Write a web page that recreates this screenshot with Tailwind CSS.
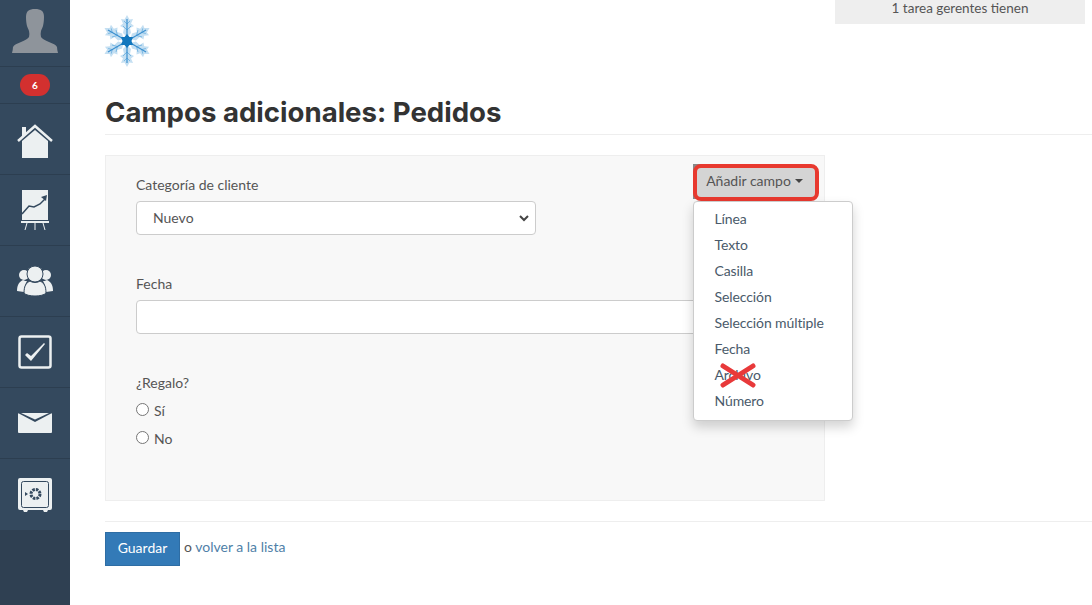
<!DOCTYPE html>
<html lang="es">
<head>
    <title>Campos adicionales: Pedidos</title>
    <meta charset="utf-8">
    <script src="https://cdn.jsdelivr.net/npm/@tailwindcss/browser@4"></script>
</head>
<body class="flex w-[1092px] h-[605px] overflow-hidden bg-white font-['Lato','Liberation_Sans',sans-serif] text-[14px] text-[#555]">
    <!-- sidebar -->
    <nav class="flex flex-col w-[70px] h-full bg-[#2f4052] shrink-0">
        <div class="flex items-end justify-center h-[67px] bg-[#34495e] border-b border-[#2c3e50]">
            <svg width="46" height="44" viewBox="0 0 46 44" class="mb-[13px]"><path fill="#8e949b" d="M23 0c-6 0-9 2-9 8 0 4 .5 7 1 9 .5 2 1.500 3 2 5 .5 2 .5 4 0 6-1 2-4 3-8 5-4 1.500-7 3-8 5 0 2-.5 4-1 6h46c-.5-2-1-4-1-6-1-2-4-3.500-8-5-4-2-7-3-8-5-.5-2-.5-4 0-6 .5-2 1.500-3 2-5 .5-2 1-5 1-9 0-6-3-8-9-8z"/></svg>
        </div>
        <div class="flex items-center justify-center h-[37px] bg-[#34495e] border-b border-[#2c3e50]">
            <span class="flex items-center justify-center w-[30px] h-[22px] rounded-full bg-[#d3302f] text-white text-[10px] font-bold">6</span>
        </div>
        <div class="flex items-center justify-center h-[71px] bg-[#34495e] border-b border-[#2c3e50]">
            <svg width="36" height="34" viewBox="0 0 36 34" class="mt-[3px]"><path fill="#ecf0f1" d="M5 3h4v6l-4 4z"/><path fill="none" stroke="#ecf0f1" stroke-width="2.500" d="M1 17 18 2l17 15"/><path fill="#ecf0f1" d="M5 17 18 6l13 11v17H5z"/></svg>
        </div>
        <div class="flex items-center justify-center h-[71px] bg-[#34495e] border-b border-[#2c3e50]">
            <svg width="28" height="40" viewBox="0 0 28 40" class="-ml-[1px]"><path fill="#ecf0f1" d="M1 0h26v30H1z"/><path fill="#ecf0f1" d="M0 31h28v2H0z"/><path fill="none" stroke="#ecf0f1" d="M6 33 4 40M14 33v7M22 33l2 7"/><path fill="none" stroke="#34495e" stroke-width="1.500" d="M1 24l7-8 5 1 6-3 5-5"/><path fill="#34495e" d="M26 5l-1 6-5-4z"/></svg>
        </div>
        <div class="flex items-center justify-center h-[71px] bg-[#34495e] border-b border-[#2c3e50]">
            <svg width="36" height="31" viewBox="0 0 36 31"><circle cx="7" cy="9" r="5" fill="#ecf0f1"/><circle cx="29" cy="9" r="5" fill="#ecf0f1"/><path fill="#ecf0f1" d="M0 25c0-6 2-9 6-11 2 1 3 1 4 1-2 3-3 7-3 11z"/><path fill="#ecf0f1" d="M36 25c0-6-2-9-6-11-2 1-3 1-4 1 2 3 3 7 3 11z"/><circle cx="18" cy="8" r="8" fill="#ecf0f1" stroke="#34495e"/><path fill="#ecf0f1" stroke="#34495e" d="M7 27c0-7 2-10 6-12 3 2 7 2 10 0 4 2 6 5 6 12-3 4-19 4-22 0z"/></svg>
        </div>
        <div class="flex items-center justify-center h-[71px] bg-[#34495e] border-b border-[#2c3e50]">
            <svg width="34" height="34" viewBox="0 0 34 34"><rect x="1.500" y="1.500" width="31" height="31" rx="2" fill="none" stroke="#ecf0f1" stroke-width="2.500"/><path fill="#ecf0f1" d="M7 20l2-2 4 3L26 8l1 1-14 17z"/></svg>
        </div>
        <div class="flex items-center justify-center h-[71px] bg-[#34495e] border-b border-[#2c3e50]">
            <svg width="34" height="20" viewBox="0 0 34 20"><rect width="34" height="20" rx="1" fill="#ecf0f1"/><path fill="#34495e" d="M0 0h34L17 9z"/><path fill="#ecf0f1" d="M3 0h28L17 6.500z"/></svg>
        </div>
        <div class="flex items-center justify-center h-[71px] bg-[#34495e]">
            <svg width="34" height="34" viewBox="0 0 34 34"><path fill="#ecf0f1" d="M2 0h30a2 2 0 0 1 2 2v28a2 2 0 0 1-2 2h-2l-1 2h-3l-1-2H10l-1 2H6l-1-2H2a2 2 0 0 1-2-2V2a2 2 0 0 1 2-2z"/><rect x="3.500" y="3.500" width="27" height="26" rx="2" fill="none" stroke="#34495e"/><circle cx="17.500" cy="16" r="4.500" fill="none" stroke="#34495e" stroke-width="3" stroke-dasharray="2.500 1"/><path fill="#34495e" d="M7 14l3 2-3 2z"/></svg>
        </div>
    </nav>

    <main class="relative flex-1 pl-[35px] flex flex-col">
        <div class="absolute top-0 left-[765px] w-[250px] h-6 bg-[#eeeeee] text-center text-[13.500px] leading-[17px]">1 tarea gerentes tienen</div>

        <svg width="46" height="52" viewBox="-23 -26 46 52" class="-ml-[1px] mt-[15px] shrink-0">
            <g id="arm">
                <path fill="#c4dff2" d="M0-26 2.500-21.500 6-22 4-17.500 7-15 3-13 4-8 0-4-4-8-3-13-7-15-4-17.500-6-22-2.500-21.500z"/>
                <path fill="none" stroke="#7ab8e3" d="M-4-15 0-11 4-15M-3-20 0-17 3-20"/>
                <path fill="none" stroke="#3a8fcf" stroke-width="1.200" d="M0 0V-22"/>
            </g>
            <use href="#arm" transform="rotate(60)"/>
            <use href="#arm" transform="rotate(120)"/>
            <use href="#arm" transform="rotate(180)"/>
            <use href="#arm" transform="rotate(240)"/>
            <use href="#arm" transform="rotate(300)"/>
            <path fill="#1277bd" d="M0-7 2.500-4 6-4 4.500 0 6 4 2.500 4 0 7-2.500 4-6 4-4.500 0-6-4-2.500-4z"/>
        </svg>

        <h1 class="mt-[29px] h-[39px] border-b border-[#eeeeee] font-['Inter','Lato',sans-serif] text-[27.6px] leading-[32px] font-bold text-[#333]">Campos adicionales: Pedidos</h1>

        <form class="relative mt-5 w-[720px] h-[346px] bg-[#f8f8f8] border border-[#eeeeee] pl-[30px] pt-[20px] shrink-0">
            <label class="block leading-[17px] mb-[8px]">Categoría de cliente</label>
            <div class="relative w-[400px] h-[34px] bg-white border border-[#ccc] rounded pl-4 leading-[31px]">
                Nuevo
                <svg width="10" height="7" viewBox="0 0 10 7" class="absolute right-[6px] top-[13px]"><path fill="none" stroke="#444" stroke-width="2" d="M1 1l4 4 4-4"/></svg>
            </div>
            <label class="block mt-[40px] leading-[17px] mb-[8px]">Fecha</label>
            <div class="w-[600px] h-[34px] bg-white border border-[#ccc] rounded"></div>
            <label class="block mt-[40px] leading-[17px]">¿Regalo?</label>
            <div class="flex items-center gap-[5px] mt-[8px] leading-[19px]">
                <span class="w-[13px] h-[13px] rounded-full bg-white border border-[#767676]"></span><span class="pt-[2px]">Sí</span>
            </div>
            <div class="flex items-center gap-[5px] mt-[7px] leading-[19px]">
                <span class="w-[13px] h-[13px] rounded-full bg-white border border-[#767676]"></span><span class="pt-[2px]">No</span>
            </div>

            <div class="absolute left-[587px] top-[8px] w-[20px] h-[35px] bg-[#888]"></div>
            <div class="absolute left-[587px] top-[8px] w-[126px] h-[37px] pb-[5px] bg-[#d4d4d4] border-[4px] border-[#e8392f] rounded-[8px] flex items-center justify-center gap-[4px] pr-[3px] text-[#555]">
                Añadir campo
                <span class="w-0 h-0 mt-[2px] border-x-[4px] border-x-transparent border-t-[4px] border-t-[#444]"></span>
            </div>
            <ul class="absolute left-[587px] top-[45px] w-[160px] h-[220px] bg-white border border-[#ccc] rounded shadow-[0_6px_12px_rgba(0,0,0,0.175)] pt-[4px] text-[#4a5a6a] tracking-[-0.1px]">
                <li class="h-[26px] pl-[20.500px] leading-[26px]">Línea</li>
                <li class="h-[26px] pl-[20.500px] leading-[26px]">Texto</li>
                <li class="h-[26px] pl-[20.500px] leading-[26px]">Casilla</li>
                <li class="h-[26px] pl-[20.500px] leading-[26px]">Selección</li>
                <li class="h-[26px] pl-[20.500px] leading-[26px]">Selección múltiple</li>
                <li class="h-[26px] pl-[20.500px] leading-[26px]">Fecha</li>
                <li class="relative h-[26px] pl-[20.500px] leading-[26px]">Archivo
                    <svg width="38" height="26" viewBox="0 0 38 26" class="absolute left-[25px] top-0"><path fill="none" stroke="#e8393a" stroke-width="5" stroke-linecap="round" d="M4 4l30 19M34 4 4 23"/></svg>
                </li>
                <li class="h-[26px] pl-[20.500px] leading-[26px]">Número</li>
            </ul>
        </form>

        <div class="mt-5 pt-[10px] border-t border-[#eeeeee] flex items-start gap-1">
            <button class="w-[75px] h-[34px] pb-[3px] bg-[#337ab7] border border-[#2e6da4] text-white">Guardar</button>
            <span class="mt-[5px] leading-[19px]">o <a class="text-[#4f7fa8]">volver a la lista</a></span>
        </div>
    </main>
</body>
</html>
